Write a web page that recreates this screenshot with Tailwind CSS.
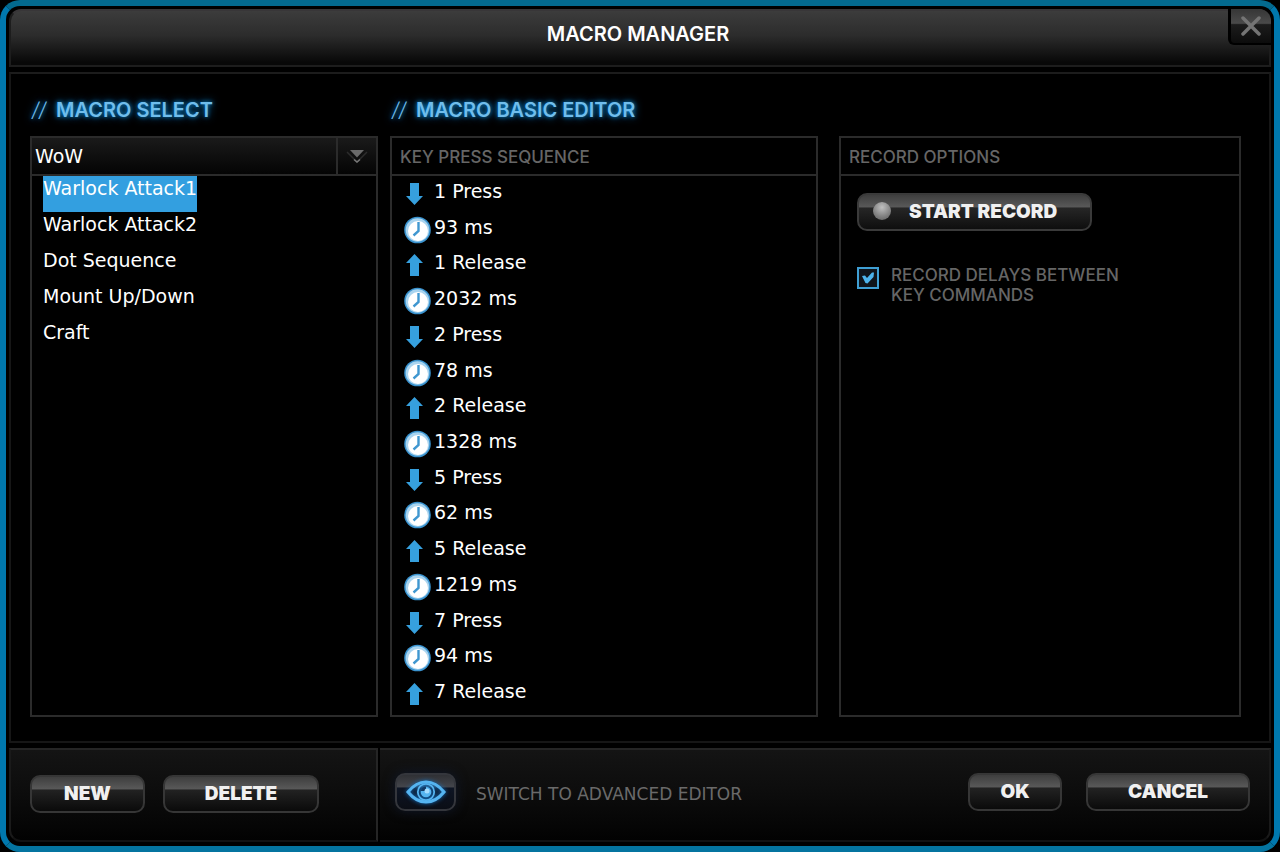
<!DOCTYPE html>
<html lang="en">
<head>
    <meta charset="UTF-8">
    <meta name="viewport" content="width=device-width, initial-scale=1.0">
    <title>Macro Manager</title>
    <script src="https://cdn.jsdelivr.net/npm/@tailwindcss/browser@4"></script>
</head>
<body class="bg-black text-white font-['Inter',sans-serif]">

    <!-- Window frame -->
    <div class="relative min-h-screen flex flex-col gap-[5px] p-[3px] pb-1 border-6 border-[#0078ae] border-t-[#036a8f] border-b-[#0474a0] rounded-[20px] bg-black">

        <!-- Title bar -->
        <header class="h-[58px] flex justify-center pt-2 pr-1 rounded-t-[12px] border-2 border-[#1d1d1d] border-t-[#383638] bg-[linear-gradient(#3c3c3c,#2c2c2c_45%,#080808_95%)]">
            <h1 class="text-[20px] leading-[30px] font-semibold">MACRO MANAGER</h1>
        </header>
        <button aria-label="Close" class="absolute top-[3px] right-[3px] w-[43px] h-[36px] flex items-center justify-center rounded-tr-[12px] rounded-bl-[6px] border-l-3 border-b-2 border-black bg-[linear-gradient(#363636,#4a4a4a_42%,#1c1c1c_46%,#0c0c0c)]">
            <svg class="w-5 h-5" viewBox="0 0 20 20" fill="none" stroke="#747474" stroke-width="3.5" stroke-linecap="round"><path d="M2 2L18 18M18 2L2 18"/></svg>
        </button>

        <!-- Main area -->
        <main class="flex-1 grid grid-cols-[348fr_428fr_411fr] grid-rows-[auto_1fr] gap-x-3 pt-[22px] pb-6 pl-[19px] pr-7 border-2 border-[#161616] border-t-[#1c1c1c]">
            <h2 class="h-[40px] flex gap-2 text-[20px] leading-[28px] font-semibold text-[#6fbdec] [text-shadow:0_0_4px_#0a7fc4,0_0_9px_#0570b5]"><span class="w-[18px] text-center font-light italic">//</span> MACRO SELECT</h2>
            <h2 class="h-[40px] flex gap-2 text-[20px] leading-[28px] font-semibold text-[#6fbdec] [text-shadow:0_0_4px_#0a7fc4,0_0_9px_#0570b5]"><span class="w-[18px] text-center font-light italic">//</span> MACRO BASIC EDITOR</h2>

            <!-- Macro select -->
            <section class="row-start-2 border-2 border-[#2b2b2b]">
                <div class="relative h-[38px] border-b-2 border-[#2b2b2b]">
                    <select aria-label="Profile" class="appearance-none w-full h-full pl-[3px] bg-[linear-gradient(#1a1a1a,#040404)] font-['DejaVu_Sans',sans-serif] text-[19px] text-white">
                        <option>WoW</option>
                    </select>
                    <div class="pointer-events-none absolute inset-y-0 right-0 w-10 flex items-center justify-center border-l-2 border-[#2b2b2b]">
                        <svg class="w-[22px] h-4" viewBox="0 0 22 16"><path d="M1 4L11 14L21 4" fill="none" stroke="#2c2c2c" stroke-width="1.5"/><path d="M8 11.500L11 14L14 11.500" fill="none" stroke="#777" stroke-width="1.5"/><path d="M4 2H18L11 9.500Z" fill="#6a6a6a"/></svg>
                    </div>
                </div>
                <ul id="macros" class="pl-[11px]"></ul>
            </section>

            <!-- Key press sequence -->
            <section class="row-start-2 flex flex-col border-2 border-[#2b2b2b]">
                <h3 class="h-[38px] pl-2 border-b-2 border-[#2b2b2b] text-[17px] leading-[38px] font-medium text-[#666]">KEY PRESS SEQUENCE</h3>
                <ol id="sequence" class="flex-1 flex flex-col pl-3 pb-[3px]"></ol>
            </section>

            <!-- Record options -->
            <section class="row-start-2 ml-[9px] border-2 border-[#2b2b2b]">
                <h3 class="h-[38px] pl-2 border-b-2 border-[#2b2b2b] text-[17px] leading-[38px] font-medium text-[#666]">RECORD OPTIONS</h3>
                <div class="px-4 pt-[17px]">
                    <button class="w-[235px] h-[38px] flex items-center gap-[18px] pl-3.5 rounded-[10px] border-2 border-[#3a3a3a] bg-[linear-gradient(#3a3a3a,#585858_36%,#262626_40%,#0c0c0c)] bg-origin-border text-[19px] font-black text-[#f0f0f0]">
                        <span class="w-[18px] h-[18px] mb-0.5 rounded-full bg-[radial-gradient(circle_at_50%_30%,#c0c0c0,#808080_60%,#5a5a5a)]"></span>
                        START RECORD
                    </button>
                    <label class="mt-[34px] flex gap-3 text-[17px] leading-[20px] font-medium text-[#666]">
                        <span class="relative mt-0.5 w-[22px] h-[22px] shrink-0">
                            <input type="checkbox" checked class="peer appearance-none block w-full h-full border-2 border-[#3f9fd4] bg-[#10151b]">
                            <svg class="hidden peer-checked:block pointer-events-none absolute inset-0" viewBox="0 0 22 22" fill="#4db4ec"><path d="M5 9L8 8.500L10 11L15 5.500L17 5.500L16.500 10L10.500 16.500L8.500 16Z"/></svg>
                        </span>
                        <span>RECORD DELAYS BETWEEN<br>KEY COMMANDS</span>
                    </label>
                </div>
            </section>
        </main>

        <!-- Footer -->
        <footer class="h-[94px] flex gap-0.5">
            <div class="w-[369px] flex items-center gap-[18px] pl-[19px] pb-0.5 border-2 border-[#252525] border-l-[#1a1a1a] border-b-[#121212] rounded-bl-[12px] bg-[linear-gradient(#141414,#0c0c0c_50%,#020202)]">
                <button class="w-[115px] h-[38px] rounded-[10px] border-2 border-[#363636] bg-[linear-gradient(#3a3a3a,#585858_36%,#222_40%,#080808)] bg-origin-border text-[19px] font-black text-[#f0f0f0]">NEW</button>
                <button class="w-[156px] h-[38px] rounded-[10px] border-2 border-[#363636] bg-[linear-gradient(#3a3a3a,#585858_36%,#222_40%,#080808)] bg-origin-border text-[19px] font-black text-[#f0f0f0]">DELETE</button>
            </div>
            <div class="flex-1 flex items-center pl-[15px] pr-[19px] pb-1.5 border-2 border-l-0 border-[#252525] border-r-[#1a1a1a] border-b-[#121212] rounded-br-[12px] bg-[linear-gradient(#141414,#0c0c0c_50%,#020202)]">
                <button id="advanced" aria-label="Switch view" class="w-[61px] h-[38px] flex items-center justify-center rounded-[10px] border-2 border-[#34363c] bg-[linear-gradient(#2c2d31,#43454b_36%,#0e1524_40%,#0a0d14)] bg-origin-border shadow-[0_0_12px_#10182a]">
                    <svg class="w-10 h-6 drop-shadow-[0_0_2px_#1270c0]" viewBox="0 0 40 24" fill="none" stroke="#55b4f0">
                        <path d="M2 12C8 4.500 14 2 20 2S32 4.500 38 12C32 19.500 26 22 20 22S8 19.500 2 12Z" stroke-width="3.2"/>
                        <circle cx="20" cy="12" r="8.200" stroke-width="1.800"/>
                        <circle cx="20" cy="12" r="5.300" fill="#55b4f0" stroke="none"/>
                        <path d="M20 11V6.500A5.300 5.300 0 0 0 14.700 11Z" fill="#123a66" stroke="none"/>
                        <circle cx="21" cy="11" r="2.500" fill="#a4dcff" stroke="none"/>
                    </svg>
                </button>
                <label for="advanced" class="ml-5 mt-1.5 flex-1 font-['DejaVu_Sans',sans-serif] text-[17px] text-[#6a6a6a]">SWITCH TO ADVANCED EDITOR</label>
                <div class="flex gap-6">
                    <button class="w-[94px] h-[38px] rounded-[10px] border-2 border-[#363636] bg-[linear-gradient(#3a3a3a,#585858_36%,#222_40%,#080808)] bg-origin-border text-[19px] font-black text-[#f0f0f0]">OK</button>
                    <button class="w-[164px] h-[38px] rounded-[10px] border-2 border-[#363636] bg-[linear-gradient(#3a3a3a,#585858_36%,#222_40%,#080808)] bg-origin-border text-[19px] font-black text-[#f0f0f0]">CANCEL</button>
                </div>
            </div>
        </footer>
    </div>

    <script>
        const macros = ["Warlock Attack1", "Warlock Attack2", "Dot Sequence", "Mount Up/Down", "Craft"];
        let selected = 0;

        const steps = [
            ["down", "1 Press"], ["delay", "93 ms"], ["up", "1 Release"], ["delay", "2032 ms"],
            ["down", "2 Press"], ["delay", "78 ms"], ["up", "2 Release"], ["delay", "1328 ms"],
            ["down", "5 Press"], ["delay", "62 ms"], ["up", "5 Release"], ["delay", "1219 ms"],
            ["down", "7 Press"], ["delay", "94 ms"], ["up", "7 Release"]
        ];

        const icons = {
            down: `<svg class="ml-0.5 w-[17px] h-[22px]" viewBox="0 0 17 22"><path d="M4 0H13V13H17L8.500 22L0 13H4Z" fill="#36a0de"/></svg>`,
            up: `<svg class="ml-0.5 w-[17px] h-[22px]" viewBox="0 0 17 22"><path d="M4 22H13V9H17L8.500 0L0 9H4Z" fill="#36a0de"/></svg>`,
            delay: `<svg class="w-[27px] h-[28px]" viewBox="0 0 27 28"><circle cx="13.500" cy="14" r="13.300" fill="#3a93cf"/><circle cx="13.500" cy="14" r="11.800" fill="#a9d4ef"/><circle cx="14" cy="15" r="10" fill="#fff"/><path d="M14.500 6V15L9.500 19.500" fill="none" stroke="#3f97d0" stroke-width="2.400"/></svg>`
        };

        function loadMacros() {
            document.getElementById("macros").innerHTML = macros.map((name, index) => `
                <li class="h-9">
                    <button class="h-9 block pb-3 font-['DejaVu_Sans',sans-serif] text-[19px] leading-[24px] ${index === selected ? "bg-[#339fe0]" : ""}"
                        onclick="selectMacro(${index})">${name}</button>
                </li>
            `).join('');
        }

        function selectMacro(index) {
            selected = index;
            loadMacros();
        }

        document.getElementById("sequence").innerHTML = steps.map(([type, text]) => `
            <li class="flex-1 flex items-center">
                <span class="w-[30px]">${icons[type]}</span>
                <span class="pb-1.5 font-['DejaVu_Sans',sans-serif] text-[19px] leading-[24px]">${text}</span>
            </li>
        `).join('');

        loadMacros();
    </script>

</body>
</html>
